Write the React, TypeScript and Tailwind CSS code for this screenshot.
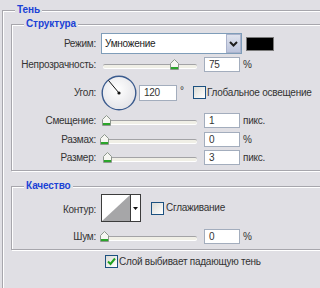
import React from "react";

function Thumb() {
  return (
    <svg width="9" height="11" viewBox="0 0 9 11">
      <path d="M0.5 4.5 L4.5 0.5 L8.5 4.5 V10.5 H0.5 Z" fill="#f6f6f2" stroke="#8d978d" />
      <rect x="1" y="8" width="7" height="2" fill="#2ba52b" />
    </svg>
  );
}

function Slider({ pos }: { pos: number }) {
  return (
    <div className="relative h-[15px] w-[97px] flex items-center">
      <div className="ml-[3px] w-[94px] h-[4px] mt-[2px] rounded-[2px] border-t border-[#a3a3a6] bg-[#f0efe6] shadow-[0_1px_0_#fff]" />
      <div className="absolute top-[2px]" style={{ left: pos }}>
        <Thumb />
      </div>
    </div>
  );
}

function Field({ value }: { value: string }) {
  return (
    <div className="flex items-center w-[36px] h-[15px] bg-white border border-[#a3adbd] pl-[4px]">
      {value}
    </div>
  );
}

function CheckBox({ checked }: { checked?: boolean }) {
  return (
    <div className="flex items-center justify-center w-[13px] h-[13px] border border-[#1c5180] bg-[linear-gradient(135deg,#dcdcd6,#ffffff)]">
      {checked && (
        <svg width="9" height="9" viewBox="0 0 9 9">
          <path d="M1 4.5 L3.5 7 L8 1.5" fill="none" stroke="#21a121" strokeWidth="2" />
        </svg>
      )}
    </div>
  );
}

function Label({ children }: { children: React.ReactNode }) {
  return <div className="w-[84px] text-right shrink-0">{children}</div>;
}

function SliderRow({
  label,
  pos,
  value,
  unit,
  mt,
}: {
  label: string;
  pos: number;
  value: string;
  unit: string;
  mt: string;
}) {
  return (
    <div className={`flex items-center h-[15px] ${mt}`}>
      <Label>{label}</Label>
      <div className="ml-[4px]">
        <Slider pos={pos} />
      </div>
      <div className="ml-[7px]">
        <Field value={value} />
      </div>
      <div className="ml-[3px]">{unit}</div>
    </div>
  );
}

const groupBox =
  "relative border border-[#a7a6ac] shadow-[inset_1px_1px_0_#fff,1px_1px_0_#fff]";
const groupTitle =
  "absolute top-[-7px] left-[12px] px-[2px] bg-[#e0dfe4] font-bold text-[#1b43d6] leading-[12px] tracking-[-0.1px]";

export default function App() {
  return (
    <div className="w-[320px] h-[288px] overflow-hidden bg-[#e0dfe4] text-[#333] text-[10px] leading-[12px] tracking-[-0.25px] font-['Liberation_Sans',Arial,sans-serif] pt-[10px] pl-[2px]">
      <div className={`${groupBox} w-[340px] h-[300px]`}>
        <span className={groupTitle}>Тень</span>

        {/* Структура */}
        <div className={`${groupBox} ml-[8px] mt-[13px] w-[330px] h-[147px]`}>
          <span className={groupTitle}>Структура</span>

          <div className="flex items-center h-[21px] mt-[8px]">
            <Label>Режим:</Label>
            <div className="ml-[5px] w-[141px] h-[21px] border border-[#7f9db9] bg-white flex items-center">
              <div className="flex-1 pl-[3px] text-[#222]">Умножение</div>
              <div className="w-[15px] h-[19px] flex items-center justify-center border border-[#aab3cc] bg-[linear-gradient(#dfe3ee,#bcc4dc)]">
                <svg width="9" height="6" viewBox="0 0 9 6">
                  <path d="M1 1 L4.5 4.5 L8 1" fill="none" stroke="#1e1e1e" strokeWidth="2" />
                </svg>
              </div>
            </div>
            <div className="ml-[4px] w-[28px] h-[14px] bg-black border border-[#7a7a7a]" />
          </div>

          <SliderRow label="Непрозрачность:" pos={70} value="75" unit="%" mt="mt-[3px]" />

          <div className="flex items-center h-[35px] mt-[3px]">
            <Label>Угол:</Label>
            <div className="ml-[5px]">
              <svg width="36" height="36" viewBox="0 0 36 36">
                <defs>
                  <radialGradient id="dg" cx="0.45" cy="0.4" r="0.6">
                    <stop offset="0" stopColor="#ffffff" />
                    <stop offset="1" stopColor="#e4e4e8" />
                  </radialGradient>
                </defs>
                <circle cx="18" cy="18" r="16.8" fill="url(#dg)" stroke="#3b5b8e" strokeWidth="1.4" />
                <line x1="18" y1="18" x2="7.5" y2="5.5" stroke="#111" strokeWidth="1" />
                <circle cx="18" cy="18" r="1.6" fill="#111" />
              </svg>
            </div>
            <div className="ml-[2px] flex items-center w-[38px] h-[16px] bg-white border border-[#a3adbd] pl-[4px]">
              120
            </div>
            <div className="ml-[3px] w-[13px] self-start mt-[10px]">°</div>
            <CheckBox />
            <div className="ml-[1px]">Глобальное освещение</div>
          </div>

          <SliderRow label="Смещение:" pos={2} value="1" unit="пикс." mt="mt-[3px]" />
          <SliderRow label="Размах:" pos={0} value="0" unit="%" mt="mt-[4px]" />
          <SliderRow label="Размер:" pos={3} value="3" unit="пикс." mt="mt-[3px]" />
        </div>

        {/* Качество */}
        <div className={`${groupBox} ml-[8px] mt-[15px] w-[330px] h-[64px]`}>
          <span className={groupTitle}>Качество</span>

          <div className="flex items-center h-[28px] mt-[7px]">
            <div className="pt-[3px]">
              <Label>Контур:</Label>
            </div>
            <div className="ml-[5px] w-[40px] h-[28px] border border-[#3c3c3c] flex bg-white">
              <svg width="28" height="26" viewBox="0 0 28 26">
                <polygon points="0,26 28,0 28,26" fill="#a6a6a8" />
              </svg>
              <div className="w-[10px] h-full border-l border-[#3c3c3c] flex items-center justify-center">
                <svg width="5" height="3" viewBox="0 0 5 3">
                  <polygon points="0,0 5,0 2.5,3" fill="#111" />
                </svg>
              </div>
            </div>
            <div className="ml-[10px]">
              <CheckBox />
            </div>
            <div className="ml-[2px]">Сглаживание</div>
          </div>

          <SliderRow label="Шум:" pos={0} value="0" unit="%" mt="mt-[7px]" />
        </div>

        <div className="flex items-center mt-[5px] ml-[102px]">
          <CheckBox checked />
          <div className="ml-[1px]">Слой выбивает падающую тень</div>
        </div>
      </div>
    </div>
  );
}
